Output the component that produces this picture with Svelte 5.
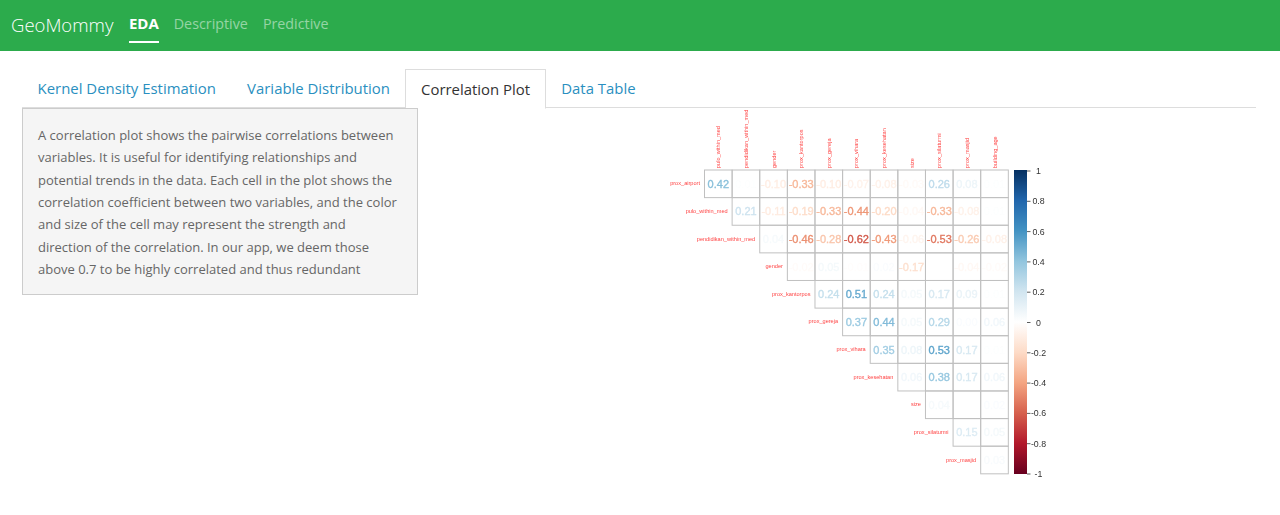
<script lang="ts">
    const palette = ["#67001F", "#B2182B", "#D6604D", "#F4A582", "#FDDBC7", "#FFFFFF", "#D1E5F0", "#92C5DE", "#4393C3", "#2166AC", "#053061"];

    const cell = 27.62;
    const originX = 64.5;
    const originY = 62;

    const topLabels = ["pulo_within_med", "pendidikan_within_med", "gender", "prox_kantorpos", "prox_gereja", "prox_vihara", "prox_kesehatan", "size", "prox_silaturmi", "prox_masjid", "building_age"];
    const rowLabels = ["prox_airport", "pulo_within_med", "pendidikan_within_med", "gender", "prox_kantorpos", "prox_gereja", "prox_vihara", "prox_kesehatan", "size", "prox_silaturmi", "prox_masjid"];

    // upper triangle, each row starts one column further right; null = blank cell
    const rows = [
        [0.42, 0.01, -0.1, -0.33, -0.1, -0.07, -0.08, -0.03, 0.26, 0.08, 0.01],
        [0.21, -0.11, -0.19, -0.33, -0.44, -0.2, -0.04, -0.33, -0.08, 0.01],
        [0.04, -0.46, -0.28, -0.62, -0.43, -0.06, -0.53, -0.26, -0.08],
        [-0.02, 0.05, -0.01, 0.02, -0.17, null, -0.04, -0.02],
        [0.24, 0.51, 0.24, 0.05, 0.17, 0.09, 0.01],
        [0.37, 0.44, 0.05, 0.29, 0, 0.06],
        [0.35, 0.08, 0.53, 0.17, 0.01],
        [0.06, 0.38, 0.17, 0.06],
        [0.04, null, 0.02],
        [0.15, 0.05],
        [0.03],
    ];

    const ticks = [1, 0.8, 0.6, 0.4, 0.2, 0, -0.2, -0.4, -0.6, -0.8, -1];

    function hex(c: string) {
        return [1, 3, 5].map((i) => parseInt(c.slice(i, i + 2), 16));
    }

    function colorFor(v: number) {
        const t = (((v || 0.02) + 1) / 2) * (palette.length - 1);
        const i = Math.min(Math.floor(t), palette.length - 2);
        const a = hex(palette[i]);
        const b = hex(palette[i + 1]);
        const f = t - i;
        const mix = a.map((x, k) => Math.round(x + (b[k] - x) * f));
        return `rgb(${mix.join(",")})`;
    }

    function tickY(v: number) {
        return originY + 1 + ((1 - v) / 2) * 303;
    }

    const tabs = ["Kernel Density Estimation", "Variable Distribution", "Correlation Plot", "Data Table"];
    const activeTab = "Correlation Plot";
</script>

<nav class="navbar">
    <span class="brand">GeoMommy</span>
    <a class="nav-link active" href="#eda">EDA</a>
    <a class="nav-link" href="#descriptive">Descriptive</a>
    <a class="nav-link" href="#predictive">Predictive</a>
</nav>

<main class="content">
    <ul class="tabs">
        {#each tabs as tab}
            <li class="tab" class:active={tab === activeTab}>{tab}</li>
        {/each}
    </ul>

    <div class="pane">
        <div class="well">
            A correlation plot shows the pairwise correlations between variables. It is useful for identifying relationships and potential trends in the data. Each cell in the plot shows the correlation coefficient between two variables, and the color and size of the cell may represent the strength and direction of the correlation. In our app, we deem those above 0.7 to be highly correlated and thus redundant
        </div>

        <svg class="corrplot" width="420" height="390" viewBox="0 0 420 390" role="img" aria-label="Correlation plot">
            <defs>
                <linearGradient id="legend" x1="0" y1="1" x2="0" y2="0">
                    {#each palette as c, i}
                        <stop offset={i / (palette.length - 1)} stop-color={c} />
                    {/each}
                </linearGradient>
            </defs>

            {#each topLabels as label, c}
                <text class="axis-label" transform="translate({originX + cell * (c + 0.5) + 2},{originY - 2}) rotate(-90)">{label}</text>
            {/each}

            {#each rowLabels as label, r}
                <text class="axis-label" text-anchor="end" x={originX + cell * r - 4.5} y={originY + cell * (r + 0.5) + 1.5}>{label}</text>
            {/each}

            {#each rows as row, r}
                {#each row as v, i}
                    {@const x = originX + cell * (r + i)}
                    {@const y = originY + cell * r}
                    <rect class="grid-cell" {x} {y} width={cell} height={cell} />
                    {#if v !== null}
                        <text class="value" x={x + cell / 2} y={y + cell / 2 + 4} text-anchor="middle" fill={colorFor(v)} stroke={colorFor(v)}>{v.toFixed(2)}</text>
                    {/if}
                {/each}
            {/each}

            <rect x="374" y="62" width="13" height="304" fill="url(#legend)" />
            {#each ticks as t}
                <line class="tick" x1="387" x2="390.5" y1={tickY(t)} y2={tickY(t)} />
                <text class="tick-label" x="398.5" y={tickY(t) + 3} text-anchor="middle">{t}</text>
            {/each}
        </svg>
    </div>
</main>

<style>
    :global(body) {
        font-family: "Open Sans", sans-serif;
        background: #fff;
    }

    .navbar {
        display: flex;
        align-items: stretch;
        height: 51px;
        padding-left: 11px;
        background: #2cab4c;
        color: #fff;
    }

    .brand {
        font-size: 18.5px;
        font-weight: 300;
        line-height: 50px;
        margin-right: 15.5px;
    }

    .nav-link {
        height: 43px;
        line-height: 47px;
        margin-right: 15px;
        font-size: 14.3px;
        color: rgba(255, 255, 255, 0.5);
        text-decoration: none;
        box-sizing: border-box;
    }

    .nav-link.active {
        color: #fff;
        font-size: 15px;
        font-weight: 700;
        border-bottom: 2px solid #fff;
    }

    .content {
        padding: 18px 24px 0 22px;
    }

    .tabs {
        display: flex;
        margin: 0;
        padding: 0;
        list-style: none;
        height: 38px;
        border-bottom: 1px solid #ddd;
    }

    .tab {
        padding: 0 15.6px;
        font-size: 14.92px;
        line-height: 39px;
        color: #2a8fc0;
    }

    .tab.active {
        height: 38px;
        color: #333;
        background: #fff;
        border: 1px solid #ddd;
        border-bottom-color: #fff;
        line-height: 38px;
        padding: 0 14.6px;
    }

    .pane {
        display: flex;
        align-items: flex-start;
    }

    .well {
        box-sizing: border-box;
        width: 396px;
        height: 187px;
        padding: 15px 15px;
        background: #f5f5f5;
        border: 1px solid #ccc;
        font-size: 13px;
        line-height: 22.33px;
        color: #666;
    }

    .corrplot {
        margin-left: 222px;
        filter: blur(0.6px);
    }

    .axis-label {
        font-family: "Liberation Sans", sans-serif;
        font-size: 5.6px;
        fill: #f44;
    }

    .grid-cell {
        fill: none;
        stroke: #c0c0c0;
        stroke-width: 1;
    }

    .value {
        font-family: "Liberation Sans", sans-serif;
        font-size: 11px;
        stroke-width: 0.35;
    }

    .tick {
        stroke: #333;
        stroke-width: 0.8;
    }

    .tick-label {
        font-family: "Liberation Sans", sans-serif;
        font-size: 8.8px;
        fill: #333;
    }
</style>
